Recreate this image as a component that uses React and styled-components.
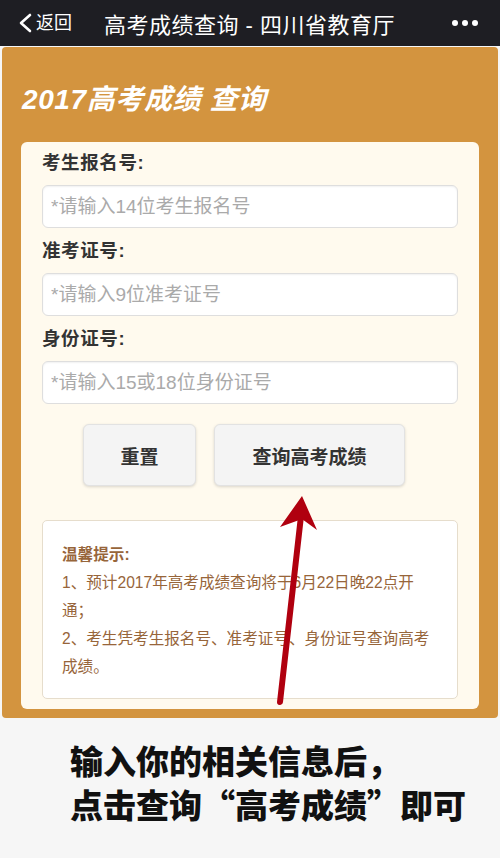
import React from 'react';
import styled, { createGlobalStyle } from 'styled-components';

const GlobalStyle = createGlobalStyle`
    html, body {
        margin: 0;
        padding: 0;
        background: #f6f6f6;
        font-family: "Liberation Sans", "Noto Sans CJK SC", sans-serif;
    }
    * { box-sizing: border-box; }
`;

function App(){
    return (
        <Page>
            <GlobalStyle />
            <TopBar>
                <Back>
                    <svg width="15" height="20" viewBox="0 0 15 20">
                        <path d="M12 2 L3 10 L12 18" fill="none" stroke="#fff" strokeWidth="2.6" strokeLinecap="round" strokeLinejoin="round" />
                    </svg>
                    <span>返回</span>
                </Back>
                <BarTitle>高考成绩查询 - 四川省教育厅</BarTitle>
                <Dots><i /><i /><i /></Dots>
            </TopBar>

            <Panel>
                <PanelTitle>2017高考成绩 查询</PanelTitle>
                <Card>
                    <Label>考生报名号:</Label>
                    <Field placeholder="*请输入14位考生报名号" />
                    <Label>准考证号:</Label>
                    <Field placeholder="*请输入9位准考证号" />
                    <Label>身份证号:</Label>
                    <Field placeholder="*请输入15或18位身份证号" />
                    <ButtonRow>
                        <Btn $w={113}>重置</Btn>
                        <Btn $w={191}>查询高考成绩</Btn>
                    </ButtonRow>
                    <Notice>
                        <NoticeHead>温馨提示:</NoticeHead>
                        <p>1、预计2017年高考成绩查询将于6月22日晚22点开通；</p>
                        <p>2、考生凭考生报名号、准考证号、身份证号查询高考成绩。</p>
                    </Notice>
                </Card>
            </Panel>

            <Caption>
                输入你的相关信息后，<br />
                点击查询“高考成绩”即可
            </Caption>

            {/* red arrow drawn over the page, pointing at the submit button */}
            <Arrow width="60" height="220" viewBox="0 0 60 220">
                <line x1="31" y1="26" x2="10" y2="212" stroke="#b0000f" strokeWidth="6" strokeLinecap="round" />
                <polygon points="32,6 47,40 32,29 10,37" fill="#b0000f" />
            </Arrow>
        </Page>
    );
}

const Page = styled.div`
    position: relative;
    width: 500px;
    min-height: 858px;
`;

const TopBar = styled.div`
    height: 46px;
    background: #1e1e23;
    color: #fff;
    display: flex;
    align-items: center;
    padding: 0 22px 0 18px;
`;

const Back = styled.div`
    display: flex;
    align-items: center;
    gap: 3px;
    font-size: 18px;
    width: 86px;
    span { line-height: 1; }
`;

const BarTitle = styled.div`
    font-size: 22px;
    letter-spacing: 0.5px;
    flex: 1;
`;

const Dots = styled.div`
    display: flex;
    gap: 4px;
    i {
        width: 6px;
        height: 6px;
        border-radius: 50%;
        background: #fff;
    }
`;

const Panel = styled.div`
    margin: 1px 2px 0;
    background: #d3943f;
    border-radius: 4px;
    padding: 37px 19px 9px;
`;

const PanelTitle = styled.h1`
    margin: 0 0 26px 1px;
    font-size: 28px;
    line-height: 32px;
    font-weight: 700;
    font-style: italic;
    color: #fff;
    letter-spacing: 0.6px;
`;

const Card = styled.div`
    background: #fffaee;
    border-radius: 6px;
    padding: 9px 21px 10px;
`;

const Label = styled.div`
    font-size: 18.5px;
    line-height: 24px;
    font-weight: 700;
    color: #333;
    letter-spacing: 0.6px;
    margin: 11px 0 10px;
    &:first-child { margin-top: 0; }
`;

const Field = styled.input`
    display: block;
    width: 100%;
    height: 43px;
    border: 1px solid #dedede;
    border-radius: 6px;
    background: #fff;
    box-shadow: inset 0 1px 2px rgba(0,0,0,0.06);
    padding: 0 8px;
    font-family: inherit;
    font-size: 19px;
    outline: none;
    &::placeholder { color: #aaa; }
`;

const ButtonRow = styled.div`
    display: flex;
    justify-content: center;
    gap: 18px;
    margin-top: 20px;
    padding-right: 12px;
`;

const Btn = styled.button`
    width: ${p => p.$w}px;
    height: 62px;
    background: #f4f4f4;
    border: 1px solid #e2e2e2;
    border-radius: 6px;
    box-shadow: 0 1px 3px rgba(0,0,0,0.15);
    font-family: inherit;
    font-size: 19px;
    font-weight: 700;
    color: #333;
`;

const Notice = styled.div`
    margin-top: 34px;
    background: #fff;
    border: 1px solid #e6ddcc;
    border-radius: 5px;
    padding: 20px 16px 17px 19px;
    color: #97653a;
    font-size: 15.6px;
    line-height: 28px;
    text-spacing-trim: space-all;
    p { margin: 0; }
`;

const NoticeHead = styled.p`
    font-weight: 700;
`;

const Caption = styled.div`
    margin-top: 20px;
    padding-left: 70px;
    font-family: "Noto Sans CJK SC", sans-serif;
    font-size: 33px;
    line-height: 44px;
    font-weight: 900;
    color: #111;
`;

const Arrow = styled.svg`
    position: absolute;
    left: 270px;
    top: 490px;
`;

export default App;
